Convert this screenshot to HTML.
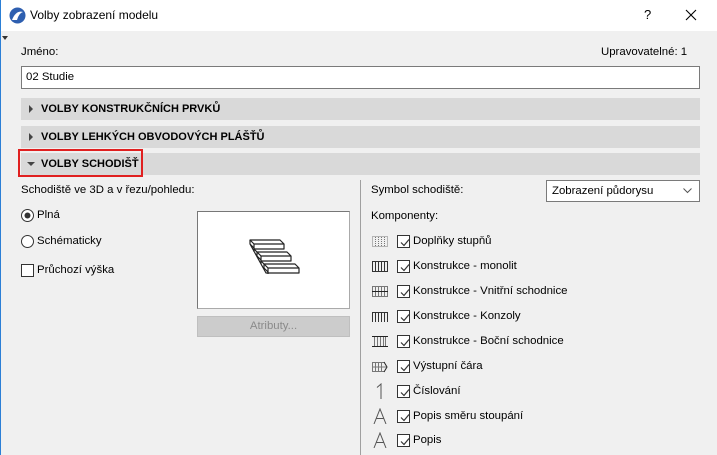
<!DOCTYPE html>
<html><head><meta charset="utf-8"><style>
*{margin:0;padding:0;box-sizing:border-box}
body{width:717px;height:455px;overflow:hidden;background:#f0f0f0;font-family:"Liberation Sans",sans-serif;font-size:11.4px;color:#000;position:relative}
.a{position:absolute;white-space:nowrap}
.bar{position:absolute;left:21px;width:679px;height:22px;background:#d9d9d9;font-weight:bold;font-size:11px;line-height:22px;padding-left:20px}
.tri{position:absolute;left:8px;top:7px;width:0;height:0;border-left:4px solid #444;border-top:4px solid transparent;border-bottom:4px solid transparent}
.cb{position:absolute;width:13px;height:13px;border:1px solid #333;background:#fff}
.cb svg{position:absolute;left:1px;top:1px}
.r .cb{left:397px}.r .t{left:413px}
</style></head><body>
<div class="a" style="left:0;top:0;width:717px;height:31px;background:#fff"></div>
<div class="a" style="left:0;top:0;width:1px;height:455px;background:#2b7fd6"></div>
<svg class="a" style="left:9px;top:7px" width="17" height="17" viewBox="0 0 17 17"><circle cx="8.5" cy="8.5" r="8" fill="#2e5fb0"/><path d="M3 13 Q7 3 14 5 Q10 6 8 13Z" fill="#fff"/></svg>
<div class="a" style="left:30px;top:8px;font-size:12px">Volby zobrazení modelu</div>
<div class="a" style="left:644px;top:7px;font-size:13px">?</div>
<svg class="a" style="left:685px;top:9px" width="12" height="12"><path d="M1 1L11 11M11 1L1 11" stroke="#000" stroke-width="1.1"/></svg>
<div class="a" style="left:2px;top:36px;width:0;height:0;border-top:4px solid #333;border-left:3px solid transparent;border-right:3px solid transparent"></div>
<div class="a" style="left:21px;top:46px">Jméno:</div>
<div class="a" style="left:601px;top:46px">Upravovatelné: 1</div>
<div class="a" style="left:21px;top:66px;width:679px;height:23px;background:#fff;border:1px solid #7a7a7a;padding:4px 4px;line-height:13px">02 Studie</div>
<div class="bar" style="top:98px"><div class="tri"></div>VOLBY KONSTRUKČNÍCH PRVKŮ</div>
<div class="bar" style="top:126px"><div class="tri"></div>VOLBY LEHKÝCH OBVODOVÝCH PLÁŠŤŮ</div>
<div class="bar" style="top:153px"><div class="tri" style="left:6px;top:9px;border-top:4px solid #444;border-left:4px solid transparent;border-right:4px solid transparent;border-bottom:0"></div>VOLBY SCHODIŠŤ</div>
<div class="a" style="left:18px;top:149px;width:125px;height:28px;border:2px solid #e02020"></div>
<div class="a" style="left:21px;top:184px">Schodiště ve 3D a v řezu/pohledu:</div>
<svg class="a" style="left:21px;top:209px" width="13" height="13"><circle cx="6.5" cy="6.5" r="6" fill="#fff" stroke="#333"/><circle cx="6.5" cy="6.5" r="3" fill="#333"/></svg>
<div class="a" style="left:37px;top:209px">Plná</div>
<svg class="a" style="left:21px;top:235px" width="13" height="13"><circle cx="6.5" cy="6.5" r="6" fill="#fff" stroke="#333"/></svg>
<div class="a" style="left:37px;top:235px">Schématicky</div>
<div class="cb" style="left:21px;top:264px"></div>
<div class="a" style="left:37px;top:264px">Průchozí výška</div>
<div class="a" style="left:197px;top:211px;width:153px;height:98px;background:#fff;border:1px solid #aaa;border-left-color:#777;border-top-color:#777"></div>
<svg class="a" style="left:240px;top:230px" width="70" height="55" fill="none" stroke="#222" stroke-width="1.2" stroke-linejoin="round">
<path d="M10 10h30l4 4H14zM14 14v5h30v-5"/>
<path d="M17 22h30l4 4H21zM21 26v5h30v-5"/>
<path d="M24 34h31l4 4H28zM28 38v5h31v-5"/>
<path d="M10 10v4l4 4v4M14 19l3 3M17 22v4l4 4v4M21 31l3 3M24 34v4l4 4v2M10 14l16 29h2"/>
</svg>
<div class="a" style="left:197px;top:316px;width:153px;height:21px;background:#cccccc;border:1px solid #bfbfbf;color:#8a8a8a;text-align:center;line-height:19px">Atributy...</div>
<div class="a" style="left:360px;top:180px;width:1px;height:275px;background:#a0a0a0"></div>
<div class="a" style="left:371px;top:184px">Symbol schodiště:</div>
<div class="a" style="left:546px;top:180px;width:154px;height:22px;background:#fff;border:1px solid #7a7a7a;padding-left:5px;line-height:20px">Zobrazení půdorysu</div>
<svg class="a" style="left:683px;top:188px" width="9" height="6"><path d="M0.5 0.5L4.5 4.5L8.5 0.5" stroke="#555" fill="none"/></svg>
<div class="a" style="left:371px;top:210px">Komponenty:</div>

<svg class="a" style="left:372px;top:236px" width="17" height="160" fill="none" stroke="#333" stroke-width="1">
<g stroke="#777" stroke-dasharray="1 1"><rect x="0.5" y="0.5" width="15" height="10"/><path d="M3.5 1v10M6.5 1v10M9.5 1v10M12.5 1v10"/></g>
<g transform="translate(0,25)"><rect x="0.5" y="0.5" width="15" height="10"/><path d="M3.5 1v10M6.5 1v10M9.5 1v10M12.5 1v10"/></g>
<g transform="translate(0,50)" stroke="#777"><rect x="0.5" y="0.5" width="15" height="10"/><path d="M3.5 1v10M6.5 1v10M9.5 1v10M12.5 1v10"/><path d="M0 5.5h16" stroke="#222"/></g>
<g transform="translate(0,75)"><path d="M0.5 1v10M3.5 1v10M6.5 1v10M9.5 1v10M12.5 1v10M15.5 1v10M0 1.5h16"/></g>
<g transform="translate(0,100)" stroke="#777"><rect x="2.5" y="0.5" width="11" height="10"/><path d="M5.5 1v10M8.5 1v10M11.5 1v10"/><path d="M0 0.5h16M0 10.5h16" stroke="#222"/></g>
<g transform="translate(0,125)" stroke="#777"><path d="M0.5 1v10M3.5 1v10M6.5 1v10M9.5 1v10M0 1.5h12M0 10.5h12M0 6h14"/><path d="M12 1l3 5-3 5" stroke="#222"/></g>
</svg>
<svg class="a" style="left:372px;top:383px" width="17" height="16" fill="none" stroke="#555" stroke-width="1"><path d="M5 4.5l4-3.5v15"/></svg>
<svg class="a" style="left:372px;top:408px" width="17" height="16" fill="none" stroke="#555" stroke-width="1"><path d="M2 16l6-15 6 15M4.3 10.5h7.4"/></svg>
<svg class="a" style="left:372px;top:432px" width="17" height="16" fill="none" stroke="#555" stroke-width="1"><path d="M2 16l6-15 6 15M4.3 10.5h7.4"/></svg>

<div class="r">
<div class="cb" style="top:235px"><svg width="11" height="11"><path d="M2 5.5l3 3 5-6" stroke="#333" fill="none" stroke-width="1.2"/></svg></div><div class="a t" style="top:235px">Doplňky stupňů</div>
<div class="cb" style="top:260px"><svg width="11" height="11"><path d="M2 5.5l3 3 5-6" stroke="#333" fill="none" stroke-width="1.2"/></svg></div><div class="a t" style="top:260px">Konstrukce - monolit</div>
<div class="cb" style="top:285px"><svg width="11" height="11"><path d="M2 5.5l3 3 5-6" stroke="#333" fill="none" stroke-width="1.2"/></svg></div><div class="a t" style="top:285px">Konstrukce - Vnitřní schodnice</div>
<div class="cb" style="top:310px"><svg width="11" height="11"><path d="M2 5.5l3 3 5-6" stroke="#333" fill="none" stroke-width="1.2"/></svg></div><div class="a t" style="top:310px">Konstrukce - Konzoly</div>
<div class="cb" style="top:335px"><svg width="11" height="11"><path d="M2 5.5l3 3 5-6" stroke="#333" fill="none" stroke-width="1.2"/></svg></div><div class="a t" style="top:335px">Konstrukce - Boční schodnice</div>
<div class="cb" style="top:360px"><svg width="11" height="11"><path d="M2 5.5l3 3 5-6" stroke="#333" fill="none" stroke-width="1.2"/></svg></div><div class="a t" style="top:360px">Výstupní čára</div>
<div class="cb" style="top:385px"><svg width="11" height="11"><path d="M2 5.5l3 3 5-6" stroke="#333" fill="none" stroke-width="1.2"/></svg></div><div class="a t" style="top:385px">Číslování</div>
<div class="cb" style="top:410px"><svg width="11" height="11"><path d="M2 5.5l3 3 5-6" stroke="#333" fill="none" stroke-width="1.2"/></svg></div><div class="a t" style="top:410px">Popis směru stoupání</div>
<div class="cb" style="top:434px"><svg width="11" height="11"><path d="M2 5.5l3 3 5-6" stroke="#333" fill="none" stroke-width="1.2"/></svg></div><div class="a t" style="top:434px">Popis</div>
</div>
</body></html>
